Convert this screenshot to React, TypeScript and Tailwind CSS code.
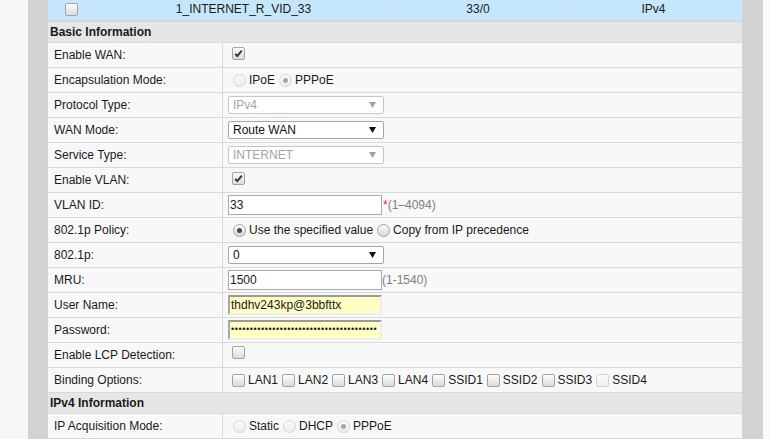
import type { ReactNode } from "react";

function Check({ checked = false, disabled = false }: { checked?: boolean; disabled?: boolean }) {
  return (
    <span
      className={
        "inline-flex h-[13px] w-[13px] shrink-0 items-center justify-center rounded-[2px] border bg-linear-to-b " +
        (disabled
          ? "border-[#d6d6d6] from-[#fbfbfb] to-[#efefef]"
          : "border-[#a3a3a3] from-[#fdfdfd] to-[#dadada]")
      }
    >
      {checked && (
        <svg width="11" height="11" viewBox="0 0 11 11">
          <path d="M2.2 5.8 L4.3 8 L8.8 2.6" fill="none" stroke="#333" strokeWidth="1.9" />
        </svg>
      )}
    </span>
  );
}

function Radio({ checked = false, disabled = false }: { checked?: boolean; disabled?: boolean }) {
  return (
    <span
      className={
        "inline-flex h-[13px] w-[13px] shrink-0 items-center justify-center rounded-full border bg-linear-to-b " +
        (disabled
          ? "border-[#d6d6d6] from-[#fbfbfb] to-[#ececec]"
          : "border-[#a3a3a3] from-[#fdfdfd] to-[#d8d8d8]")
      }
    >
      {checked && (
        <span className={"h-[5px] w-[5px] rounded-full " + (disabled ? "bg-[#a8a8a8]" : "bg-[#4a4a4a]")} />
      )}
    </span>
  );
}

function Arrow({ disabled = false }: { disabled?: boolean }) {
  return (
    <svg width="7" height="6" viewBox="0 0 7 6">
      <path d="M0 0 H7 L3.5 6 Z" fill={disabled ? "#a0a0a0" : "#111"} />
    </svg>
  );
}

function Select({ value, disabled = false }: { value: string; disabled?: boolean }) {
  return (
    <div
      className={
        "flex h-[18px] w-[156px] items-center justify-between rounded-[2px] border bg-white pl-[4px] pr-[7px] " +
        (disabled ? "border-[#c6c6c6] text-[#a3a3a3]" : "border-[#a6a6a6] text-[#111]")
      }
    >
      <span>{value}</span>
      <Arrow disabled={disabled} />
    </div>
  );
}

function Input({ value, yellow = false, hint }: { value: ReactNode; yellow?: boolean; hint?: ReactNode }) {
  return (
    <div className="flex items-center">
      <div
        className={
          "flex h-[20px] w-[154px] items-center overflow-hidden whitespace-nowrap " +
          (yellow
            ? "border-2 border-t-[#9a9a9a] border-l-[#a8a8a8] border-r-[#ededed] border-b-[#ededed] bg-[#ffffc4] pl-[1px]"
            : "border border-[#a9a9a9] bg-white pl-[1px]")
        }
      >
        {value}
      </div>
      {hint}
    </div>
  );
}

function Row({ label, children }: { label: string; children: ReactNode }) {
  return (
    <div className="flex h-[25px] border-b border-[#d9d9d9] bg-[#f8f8f8]">
      <div className="flex w-[175px] shrink-0 items-center border-r border-[#d9d9d9] pl-[6px]">{label}</div>
      <div className="flex items-center pl-[5px]">{children}</div>
    </div>
  );
}

function Header({ title }: { title: string }) {
  return (
    <div className="flex h-[21px] items-center border-b border-[#d9d9d9] bg-[#e6e6e6] pl-[2px] font-bold">
      {title}
    </div>
  );
}

function Opt({ children }: { children: ReactNode }) {
  return <span className="ml-[3px] mr-[4px]">{children}</span>;
}

const bindings = ["LAN1", "LAN2", "LAN3", "LAN4", "SSID1", "SSID2", "SSID3", "SSID4"];

export default function App() {
  return (
    <div className="flex h-[439px] w-[770px] overflow-hidden bg-[#f7f7f7] font-['Liberation_Sans',Arial,sans-serif] text-[12px] text-[#1a1a1a]">
      <div className="w-[28px] shrink-0" />
      <div className="w-[20px] shrink-0 bg-[#d3d3d3]" />
      <div className="w-[694px] shrink-0">
        <div className="flex h-[22px] border-b-2 border-[#d4d8dc] bg-[#c6e6fb] pb-[2px]">
          <div className="flex w-[48px] items-center justify-center border-r border-[#d3e3ee]">
            <Check />
          </div>
          <div className="flex w-[296px] items-center justify-center border-r border-[#d3e3ee]">
            1_INTERNET_R_VID_33
          </div>
          <div className="flex w-[173px] items-center justify-center border-r border-[#d3e3ee]">33/0</div>
          <div className="flex flex-1 items-center justify-center">IPv4</div>
        </div>

        <Header title="Basic Information" />
        <Row label="Enable WAN:">
          <span className="ml-[4px]">
            <Check checked />
          </span>
        </Row>
        <Row label="Encapsulation Mode:">
          <span className="ml-[5px] flex items-center">
            <Radio disabled />
            <Opt>IPoE</Opt>
            <Radio checked disabled />
            <Opt>PPPoE</Opt>
          </span>
        </Row>
        <Row label="Protocol Type:">
          <Select value="IPv4" disabled />
        </Row>
        <Row label="WAN Mode:">
          <Select value="Route WAN" />
        </Row>
        <Row label="Service Type:">
          <Select value="INTERNET" disabled />
        </Row>
        <Row label="Enable VLAN:">
          <span className="ml-[4px]">
            <Check checked />
          </span>
        </Row>
        <Row label="VLAN ID:">
          <Input
            value="33"
            hint={
              <span className="ml-[1px] text-[#808080]">
                <span className="text-[#ff2020]">*</span>(1–4094)
              </span>
            }
          />
        </Row>
        <Row label="802.1p Policy:">
          <span className="ml-[5px] flex items-center">
            <Radio checked />
            <Opt>Use the specified value</Opt>
            <Radio />
            <Opt>Copy from IP precedence</Opt>
          </span>
        </Row>
        <Row label="802.1p:">
          <Select value="0" />
        </Row>
        <Row label="MRU:">
          <Input value="1500" hint={<span className="text-[#808080]">(1-1540)</span>} />
        </Row>
        <Row label="User Name:">
          <Input value="thdhv243kp@3bbfttx" yellow />
        </Row>
        <Row label="Password:">
          <Input
            value={<span className="text-[9px] tracking-[0.6px]">{"•".repeat(39)}</span>}
            yellow
          />
        </Row>
        <Row label="Enable LCP Detection:">
          <span className="ml-[4px]">
            <Check />
          </span>
        </Row>
        <Row label="Binding Options:">
          <span className="ml-[4px] flex items-center">
            {bindings.map((b) => (
              <span key={b} className="flex items-center">
                <Check disabled={b === "SSID4"} />
                <span className="ml-[3px] mr-[4px]">{b}</span>
              </span>
            ))}
          </span>
        </Row>

        <Header title="IPv4 Information" />
        <Row label="IP Acquisition Mode:">
          <span className="ml-[5px] flex items-center">
            <Radio disabled />
            <Opt>Static</Opt>
            <Radio disabled />
            <Opt>DHCP</Opt>
            <Radio checked disabled />
            <Opt>PPPoE</Opt>
          </span>
        </Row>
      </div>
      <div className="w-[21px] shrink-0 bg-[#d3d3d3]" />
      <div className="flex-1 bg-[#fafafa]" />
    </div>
  );
}
